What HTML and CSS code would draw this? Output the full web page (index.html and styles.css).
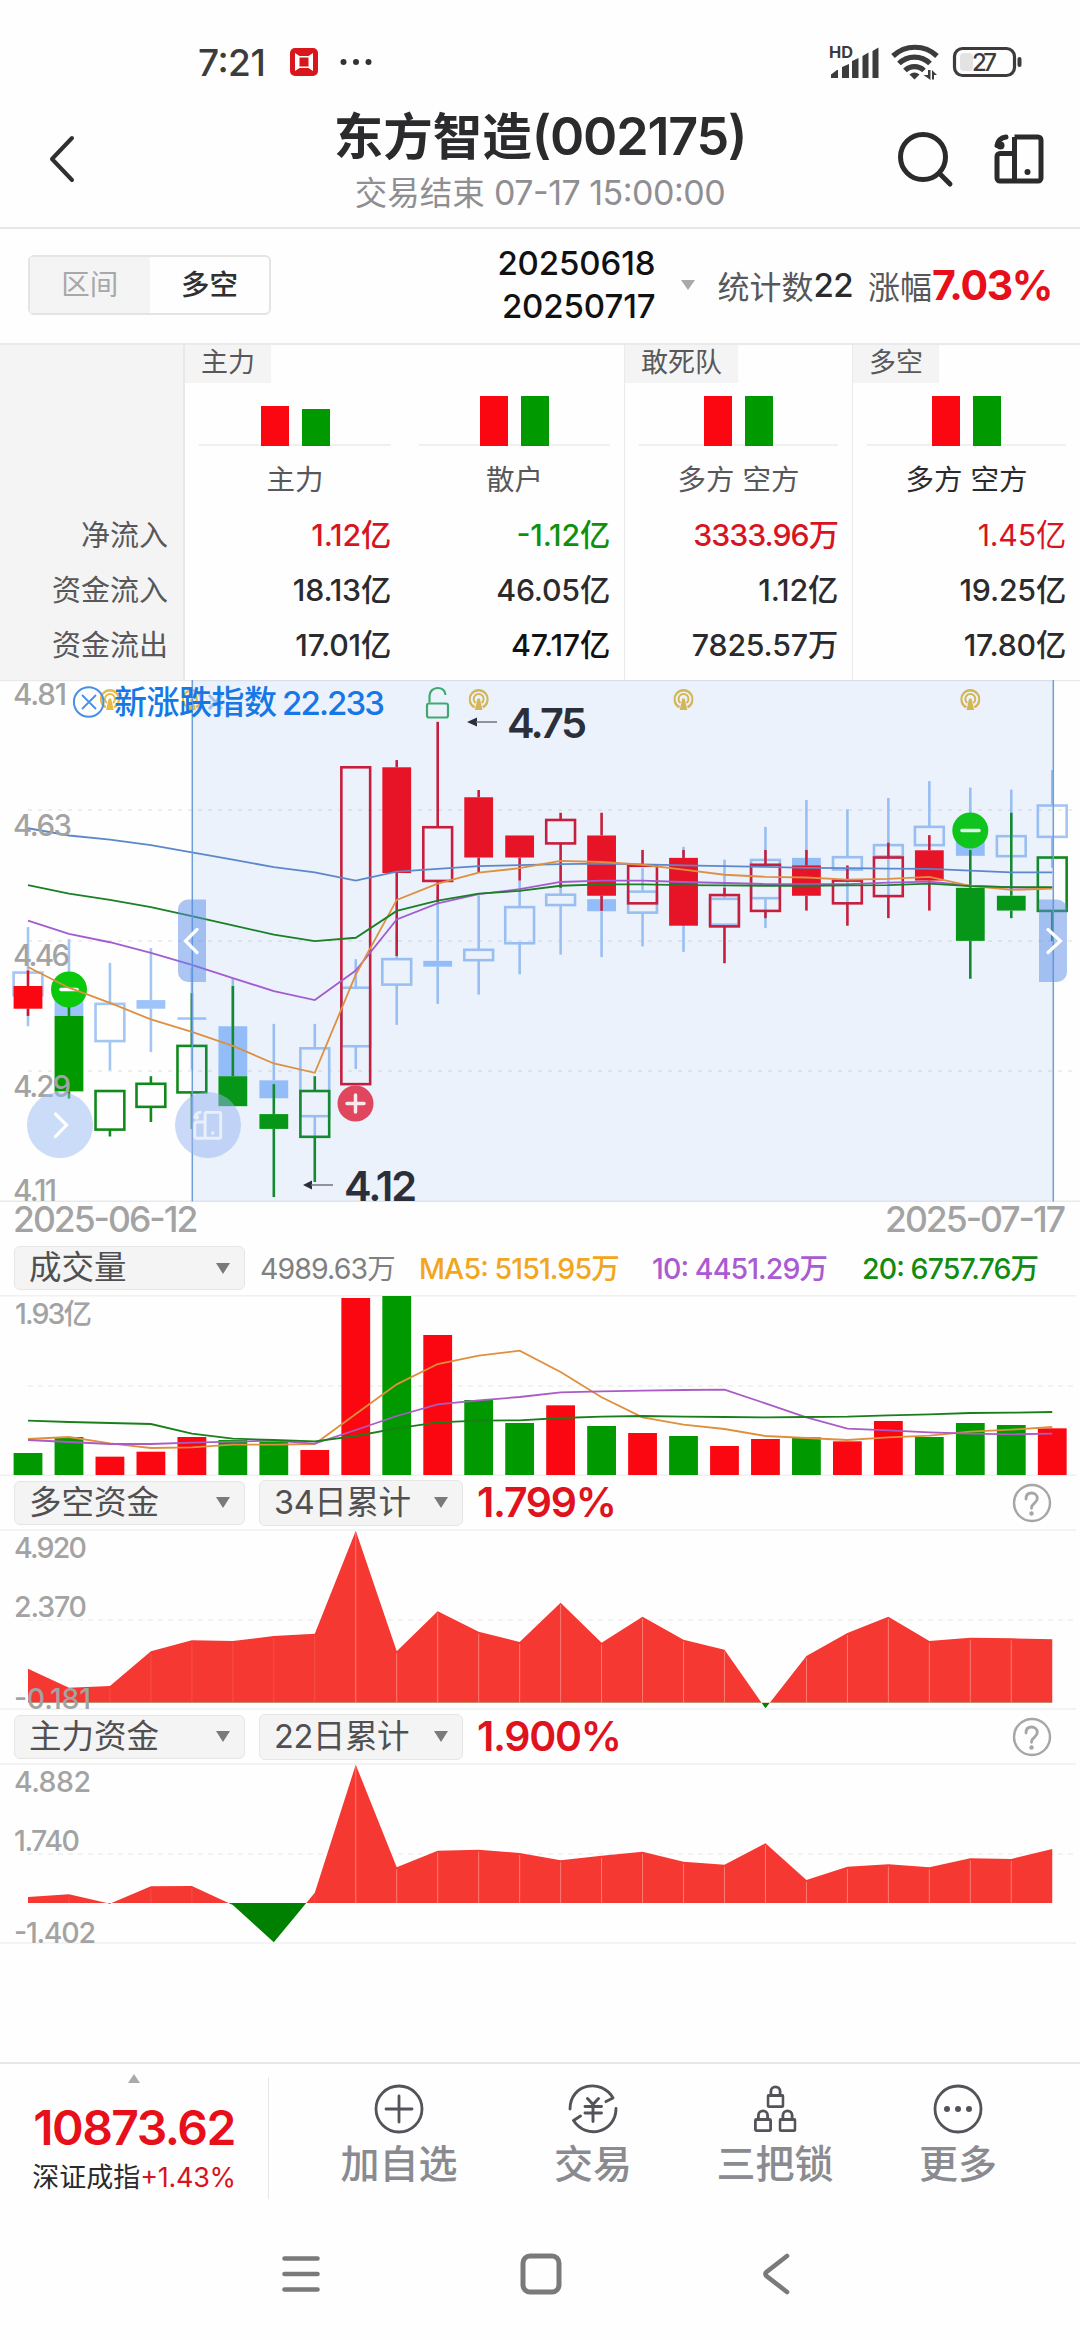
FILE: index.html
```html
<!DOCTYPE html>
<html lang="zh-CN">
<head>
<meta charset="utf-8">
<title>东方智造(002175)</title>
<link rel="stylesheet" href="styles.css">
</head>
<body>
<svg class="defs" width="0" height="0">
  <defs>
    <symbol id="split" viewBox="0 0 50 50">
      <path d="M20.500 3h23.500a3 3 0 0 1 3 3v38a3 3 0 0 1-3 3H6a3 3 0 0 1-3-3V22.500a3 3 0 0 1 3-3h13M20.500 3v44" fill="none" stroke="currentColor" stroke-width="5"/>
      <path d="M3 11.500Q4.500 4 12 3" fill="none" stroke="currentColor" stroke-width="5" stroke-linecap="round"/>
      <circle cx="6.500" cy="11.500" r="4" fill="currentColor"/>
      <circle cx="33.500" cy="38" r="3" fill="currentColor"/>
    </symbol>
    <symbol id="help" viewBox="0 0 40 40">
      <circle cx="20" cy="20" r="18" fill="none" stroke="#a6a6a6" stroke-width="2.400"/>
      <path d="M14 16c0-4 2.300-6 5.500-6s5.800 2.300 5.800 5.500c0 4.500-5.800 5-5.800 9v.8" fill="none" stroke="#a6a6a6" stroke-width="2.800" stroke-linecap="round"/>
      <circle cx="19.500" cy="30.500" r="2.200" fill="#a6a6a6"/>
    </symbol>
    <symbol id="tower" viewBox="0 0 20 21">
      <path d="M6 18.300A9 9 0 1 1 14 18.300" fill="none" stroke="#e5bb45" stroke-width="2.300"/>
      <path d="M7 14A5 5 0 1 1 13 14" fill="none" stroke="#e5bb45" stroke-width="2"/>
      <path d="M8.800 9.500h2.400L13.800 21H6.200Z" fill="#e5bb45"/>
    </symbol>
    <symbol id="lock" viewBox="0 0 18 23">
      <rect x="1.400" y="10.500" width="15.200" height="11.100" rx="1" fill="none" stroke="#53535a" stroke-width="2.800"/>
      <path d="M4.400 10V6.500C4.400 .2 13.600 .2 13.600 6.500V10" fill="none" stroke="#53535a" stroke-width="2.800"/>
    </symbol>
  </defs>
</svg>

<div class="status">
  <span class="clock">7:21</span>
  <svg class="badge" width="28" height="28" viewBox="0 0 28 28"><rect width="28" height="28" rx="5" fill="#d8161c"/><path d="M5 5l4.500 3h9L23 5v18l-4.500-3h-9L5 23Z" fill="#fff"/><path d="M9.500 9.500h9v9h-9Z" fill="#d8161c"/></svg>
  <svg class="dots" width="32" height="8" viewBox="0 0 32 8" fill="#333"><circle cx="3.500" cy="4" r="3"/><circle cx="16" cy="4" r="3"/><circle cx="28.500" cy="4" r="3"/></svg>
  <svg class="signals" width="196" height="40" viewBox="826 42 196 40">
    <text x="828" y="57.500" class="hd" textLength="24" lengthAdjust="spacingAndGlyphs">HD</text>
    <path d="M830 78v-3.500l6-4.500h1v8ZM841 78V67l7-3v14ZM851 78V61l6.500-3v20ZM861.500 78V56l6-3.500V78ZM871.500 78V51l6-3.500V78Z" fill="#3c3c3c"/>
    <g fill="none" stroke="#3c3c3c" stroke-width="5.200"><path d="M892 56a32 32 0 0 1 44 0"/><path d="M898 63.500a22 22 0 0 1 31 0"/><path d="M904 70.500a13.500 13.500 0 0 1 19 0"/></g>
    <path d="M908.500 74.500q5-4 10 0l-5 5ZM922.500 75h4.500v-5h2.500v10ZM931 70l5 5h-3v4.500h-2Z" fill="#3c3c3c"/>
    <rect x="953.500" y="48.500" width="60" height="27" rx="8" fill="none" stroke="#3c3c3c" stroke-width="3.200"/>
    <rect x="959" y="53" width="13" height="18" rx="4" fill="#e3e3e3"/>
    <text x="971" y="71" class="pct" textLength="25">27</text>
    <rect x="1016.500" y="57" width="4" height="10" rx="2" fill="#3c3c3c"/>
  </svg>
</div>

<header class="header">
  <svg class="back" width="30" height="50" viewBox="0 0 30 50"><path d="M25 4L5 25L25 46" fill="none" stroke="#303030" stroke-width="4" stroke-linecap="round" stroke-linejoin="round"/></svg>
  <div class="titles">
    <h1>东方智造<span>(002175)</span></h1>
    <p>交易结束 <span>07-17 15:00:00</span></p>
  </div>
  <svg class="search" width="58" height="58" viewBox="0 0 58 58"><circle cx="26" cy="26" r="22.500" fill="none" stroke="#2b2b2d" stroke-width="5"/><path d="M43 43L53 53" stroke="#2b2b2d" stroke-width="5" stroke-linecap="round"/></svg>
  <svg class="layout" width="50" height="50"><use href="#split"/></svg>
</header>

<div class="toolbar">
  <div class="toggle"><span class="off">区间</span><span class="on">多空</span></div>
  <div class="range"><span>20250618</span><span>20250717</span></div>
  <i class="caret"></i>
  <div class="stat">统计数<b>22</b></div>
  <div class="stat gain">涨幅<strong>7.03%</strong></div>
</div>

<section class="flows">
  <div class="col names"><span class="net">净流入</span><span class="in">资金流入</span><span class="out">资金流出</span></div>
  <div class="col">
    <em>主力</em>
    <div class="bars"><i class="r" style="height:40px"></i><i class="g" style="height:37px"></i></div>
    <h3>主力</h3>
    <span class="net up">1.12亿</span><span class="in">18.13亿</span><span class="out">17.01亿</span>
  </div>
  <div class="col">
    <div class="bars"><i class="r" style="height:50px"></i><i class="g" style="height:50px"></i></div>
    <h3>散户</h3>
    <span class="net down">-1.12亿</span><span class="in">46.05亿</span><span class="out strong">47.17亿</span>
  </div>
  <div class="col wide">
    <em>敢死队</em>
    <div class="bars"><i class="r" style="height:50px"></i><i class="g" style="height:50px"></i></div>
    <h3>多方 空方</h3>
    <span class="net up tight">3333.96万</span><span class="in">1.12亿</span><span class="out">7825.57万</span>
  </div>
  <div class="col wide">
    <em>多空</em>
    <div class="bars"><i class="r" style="height:50px"></i><i class="g" style="height:50px"></i></div>
    <h3 class="dark">多方 空方</h3>
    <span class="net up light">1.45亿</span><span class="in">19.25亿</span><span class="out">17.80亿</span>
  </div>
</section>

<svg class="chart" width="1080" height="522" viewBox="0 680 1080 522">
  <path d="M0 680.500H1080M0 1201.200H1080" stroke="#e9e9ec" stroke-width="1.500"/>
  <path d="M28 810H1072M28 940.900H1072M28 1071H1072" stroke="#ededed" stroke-width="2" stroke-dasharray="4 6"/>
  <g id="ghost"></g>
  <g id="candles"></g>
  <g id="towers"></g>
  <g stroke="#41ad63" fill="none" stroke-width="2.200"><rect x="427" y="703.500" width="21" height="14" rx="2"/><path d="M429.500 702.500V696c0-10.500 16-10.500 16-1"/></g>
  <rect x="192" y="680" width="861" height="521.500" fill="#468cf0" fill-opacity=".1"/>
  <g><circle cx="69" cy="989.500" r="18" fill="#0cc80c"/><path d="M61 989.500H77" stroke="#fff" stroke-width="3.500" stroke-linecap="round"/></g>
  <g><circle cx="970.300" cy="830.500" r="18" fill="#10c41e"/><path d="M962 830.500H979" stroke="#dff5e6" stroke-width="3.500" stroke-linecap="round"/></g>
  <g><circle cx="355.500" cy="1103.500" r="18" fill="#de475d"/><path d="M347 1103.500H364M355.500 1095V1112" stroke="#fbe9ee" stroke-width="3.500" stroke-linecap="round"/></g>
  <g id="averages"></g>
  <path d="M192.300 680V1201.500M1053.300 680V1201.500" stroke="#6f9fd8" stroke-width="1.500"/>
  <g class="axis">
    <text x="13" y="705.300" textLength="54">4.81</text>
    <text x="13" y="835.500" textLength="59">4.63</text>
    <text x="13" y="965.700" textLength="57">4.46</text>
    <text x="13" y="1096.500" textLength="58">4.29</text>
    <text x="13" y="1201" textLength="44">4.11</text>
  </g>
  <path d="M206 899.500H188a10 10 0 0 0-10 10V972a10 10 0 0 0 10 10H206Z" fill="#5a8ce6" fill-opacity=".5"/>
  <path d="M1039 899.500H1057a10 10 0 0 1 10 10V972a10 10 0 0 1-10 10H1039Z" fill="#5a8ce6" fill-opacity=".5"/>
  <path d="M197 929.500L185.500 941L197 952.500M1048 929.500L1060.500 941L1048 952.500" fill="none" stroke="#fff" stroke-width="3.200" stroke-linecap="round"/>
  <g><circle cx="60" cy="1125" r="33" fill="#96b9ef" fill-opacity=".5"/><path d="M55.500 1114L66.500 1125L55.500 1136.500" fill="none" stroke="#fff" stroke-width="3.200" stroke-linecap="round"/></g>
  <g><circle cx="208" cy="1125" r="33" fill="#96b4f0" fill-opacity=".5"/><svg x="193" y="1110.500" width="29.500" height="29.500" color="#e9effb"><use href="#split"/></svg></g>
  <g stroke="#4a8fe6" fill="none"><circle cx="88.700" cy="702" r="14.800" stroke-width="2"/><path d="M82 695L96 709M96 695L82 709" stroke-width="1.800"/><path d="M209 695L222 709M222 695L209 709" stroke="#9fc0f0" stroke-width="3"/></g>
  <text x="114" y="714" class="index" textLength="163">新涨跌指数</text>
  <text x="282" y="714.500" class="index" textLength="103">22.233</text>
  <g fill="#2b2f3a"><path d="M467 722L477 717.500V726.500Z"/><path d="M303 1185L312 1180.500V1189.500Z"/><path d="M476 721.300h21v1.400h-21ZM311 1184.300h22v1.400h-22Z" fill="#70747c"/></g>
  <text x="507" y="738" class="mark" textLength="80">4.75</text>
  <text x="344" y="1201" class="mark" textLength="73">4.12</text>
</svg>

<div class="dates"><span>2025-06-12</span><span>2025-07-17</span></div>

<div class="controls first">
  <div class="select">成交量<i></i></div>
  <span class="total">4989.63万</span><span class="ma5">MA5: 5151.95万</span><span class="ma10">10: 4451.29万</span><span class="ma20">20: 6757.76万</span>
</div>
<svg class="chart" width="1080" height="181" viewBox="0 1295 1080 181">
  <path d="M0 1295.700H1076M0 1475.200H1076" stroke="#f0f0f0" stroke-width="1.500"/>
  <path d="M28 1386H1074" stroke="#eeeeee" stroke-width="1.500" stroke-dasharray="5 5"/>
  <g id="volume"></g>
  <g class="axis thin"><text x="15" y="1324" textLength="77">1.93亿</text></g>
</svg>

<div class="controls">
  <div class="select">多空资金<i></i></div><div class="select small">34日累计<i></i></div>
  <strong>1.799%</strong><svg class="ask" width="40" height="40"><use href="#help"/></svg>
</div>
<svg class="chart" width="1080" height="181" viewBox="0 1529 1080 181">
  <path d="M0 1530H1076M0 1709H1076" stroke="#f0f0f0" stroke-width="1.500"/>
  <path d="M28 1620H1074" stroke="#eeeeee" stroke-width="1.500" stroke-dasharray="5 5"/>
  <g id="fundA"></g>
  <g class="axis thin">
    <text x="14" y="1558" textLength="73">4.920</text><text x="14" y="1617" textLength="73">2.370</text><text x="14" y="1708.500" textLength="77">-0.181</text>
  </g>
</svg>

<div class="controls">
  <div class="select">主力资金<i></i></div><div class="select small">22日累计<i></i></div>
  <strong>1.900%</strong><svg class="ask" width="40" height="40"><use href="#help"/></svg>
</div>
<svg class="chart" width="1080" height="181" viewBox="0 1763 1080 181">
  <path d="M0 1764H1076M0 1943H1076" stroke="#f0f0f0" stroke-width="1.500"/>
  <path d="M28 1854H1074" stroke="#eeeeee" stroke-width="1.500" stroke-dasharray="5 5"/>
  <g id="fundB"></g>
  <g class="axis thin">
    <text x="14" y="1792" textLength="77">4.882</text><text x="14" y="1851" textLength="66">1.740</text><text x="14" y="1942.500" textLength="82">-1.402</text>
  </g>
</svg>

<footer class="footer">
  <div class="market"><i></i><b>10873.62</b><p>深证成指<span>+1.43%</span></p></div>
  <nav class="tabs">
    <a><svg width="50" height="50" viewBox="0 0 50 50" fill="none" stroke="#53535a" stroke-width="2.800"><circle cx="25" cy="25" r="23"/><path d="M25 12V38M12 25H38" stroke-linecap="round"/></svg>加自选</a>
    <a><svg width="50" height="50" viewBox="0 0 50 50" fill="none" stroke="#53535a" stroke-width="2.900" stroke-linecap="round" stroke-linejoin="round"><path d="M2 25C2 -.5 33.500 -6 45 14L38 17.500M48 24.500C48 48 18.500 56.500 5.500 36.500L12.500 32M19.500 14.500L25 20.500L30.500 14.500M17 22.500H33.500M17 29H33.500M25 20.500V37.500"/></svg>交易</a>
    <a><svg width="50" height="50" viewBox="0 0 50 50"><use href="#lock" x="16.500" y="1" width="18" height="23"/><use href="#lock" x="4" y="25" width="18" height="23"/><use href="#lock" x="28.500" y="25" width="18" height="23"/></svg>三把锁</a>
    <a><svg width="50" height="50" viewBox="0 0 50 50"><circle cx="25" cy="25" r="23" fill="none" stroke="#53535a" stroke-width="2.800"/><g fill="#53535a"><circle cx="14" cy="25" r="3"/><circle cx="25" cy="25" r="3"/><circle cx="36" cy="25" r="3"/></g></svg>更多</a>
  </nav>
</footer>

<div class="keys">
  <svg width="40" height="44" viewBox="0 0 40 44"><path d="M3.500 6.500H36.500M3.500 22H36.500M3.500 37.500H36.500" stroke="#7a7a7a" stroke-width="4.600" stroke-linecap="round"/></svg>
  <svg width="44" height="44" viewBox="0 0 44 44"><rect x="4" y="4" width="36" height="36" rx="7" fill="none" stroke="#7a7a7a" stroke-width="5"/></svg>
  <svg width="32" height="44" viewBox="0 0 32 44"><path d="M27 4L6.500 20Q4.500 22 6.500 24L27 40" fill="none" stroke="#7a7a7a" stroke-width="4.600" stroke-linecap="round"/></svg>
</div>
<script src="charts.js"></script>
</body>
</html>
```
FILE: styles.css
```css
* { box-sizing: border-box; }
body {
  margin: 0;
  width: 1080px;
  height: 2340px;
  display: flex;
  flex-direction: column;
  background: #fefefe;
  color: #2b2b2d;
  font-family: Inter, "Noto Sans CJK SC", sans-serif;
  font-feature-settings: "case";
  overflow: hidden;
}
h1, h3, p { margin: 0; font-weight: 400; }
i, em { font-style: normal; }
.defs { position: absolute; }

.status { height: 108px; flex: none; padding: 16px 57px 0 198px; display: flex; align-items: center; }
.clock { width: 92px; font-size: 37px; font-weight: 500; letter-spacing: -.5px; color: #3c3c3c; }
.dots { margin-left: 22px; }
.signals { margin-left: auto; }
.hd { font-size: 15.500px; font-weight: 700; fill: #3c3c3c; }
.pct { font-size: 24px; font-weight: 500; fill: #3c3c3c; }

.header { height: 121px; flex: none; border-bottom: 2px solid #e6e6e8; display: flex; align-items: flex-start; padding: 0 34px 0 47px; }
.back { margin-top: 26px; }
.titles { width: 800px; margin-left: 63px; text-align: center; }
h1 { height: 60px; margin-top: -1px; line-height: 60px; font-size: 49.500px; font-weight: 700; white-space: nowrap; }
h1 span { font-size: 52px; font-weight: 600; letter-spacing: -1.200px; }
.titles p { height: 48px; line-height: 48px; margin-top: 2px; font-size: 32.500px; color: #8f8f93; white-space: nowrap; }
.titles p span { font-size: 34px; letter-spacing: -.5px; }
.search { flex: none; margin: 23px 0 0 -43px; }
.layout { flex: none; margin: 26px 0 0 39px; }

.toolbar { height: 114px; flex: none; padding: 0 28px 2px 28px; display: flex; align-items: center; }
.toggle { width: 244px; height: 60px; border: 2px solid #e4e4e5; border-radius: 6px; display: flex; font-size: 28.500px; line-height: 55px; text-align: center; }
.toggle span { flex: 1; }
.toggle .off { background: #f4f4f4; color: #a8a8a8; }
.toggle .on { color: #303030; font-weight: 500; }
.range { width: 385px; display: flex; flex-direction: column; text-align: right; font-size: 33px; line-height: 43px; font-weight: 500; letter-spacing: -.1px; color: #111; }
.caret { margin-left: 25px; border: 7px solid transparent; border-top: 10px solid #a9a9a9; border-bottom: 0; }
.stat { margin-left: 23px; font-size: 32px; color: #58585a; white-space: nowrap; display: flex; align-items: center; }
.stat b { font-size: 33px; font-weight: 500; color: #2b2b2d; letter-spacing: -.6px; }
.stat.gain { margin-left: 15px; }
.gain strong { font-size: 41px; font-weight: 700; color: #e60f1a; letter-spacing: -1.400px; }

.flows { height: 337px; flex: none; display: grid; grid-template-columns: 185px 220px 219px 228px 228px; }
.flows .col { border-top: 2px solid #eaeaea; display: grid; grid-template-rows: 38px 63px 63px repeat(3, 55px); padding: 0 14px; font-size: 30.300px; }
.flows .names { background: #f4f4f4; border-right: 2px solid #e8e8e8; padding-right: 15px; color: #58585a; font-size: 29px; }
.col.wide { border-left: 1.500px solid #eaeaea; }
.col em { grid-row: 1; justify-self: start; margin-left: -14px; padding: 0 16px; background: #f4f4f4; font-size: 27px; line-height: 36px; color: #58585a; white-space: nowrap; }
.bars { grid-row: 2; display: flex; justify-content: center; align-items: flex-end; gap: 13px; border-bottom: 2px solid #f0f0f0; }
.bars i { width: 28px; margin-bottom: -2px; }
.bars .r { background: #fa0712; }
.bars .g { background: #009900; }
.col h3 { grid-row: 3; font-size: 28.500px; line-height: 68px; text-align: center; color: #58585a; white-space: nowrap; }
.col h3.dark { color: #2b2b2d; }
.col > span { line-height: 53px; text-align: right; white-space: nowrap; font-weight: 500; letter-spacing: -.2px; }
.col .net { grid-row: 4; }
.col .in { grid-row: 5; }
.col .out { grid-row: 6; }
.names > span { font-weight: 400; letter-spacing: 0; }
.col > .tight { letter-spacing: -1px; }
.col .up { color: #d8141f; }
.col > .light { font-weight: 400; }
.col .down { color: #0e920e; }
.col .strong { color: #111; }

.chart { display: block; flex: none; }
.axis text { font-size: 29.500px; font-weight: 500; fill: #a3a3a3; }
.axis.thin text { font-size: 28.500px; }
.index { font-size: 33px; fill: #1677e6; font-weight: 500; }
.mark { font-size: 41.500px; font-weight: 600; fill: #2b2f3a; }

.dates { height: 39px; flex: none; padding: 0 16px 4px 13px; display: flex; justify-content: space-between; font-size: 35.500px; line-height: 35px; font-weight: 500; letter-spacing: -2px; color: #a3a3a3; }

.controls { height: 53px; flex: none; display: flex; align-items: center; padding-left: 14px; white-space: nowrap; }
.controls.first { height: 54px; }
.select { width: 231px; height: 44px; border: 1.500px solid #e6e6e6; border-radius: 6px; background: #f4f4f4; padding: 0 14px 0 14px; display: flex; align-items: center; justify-content: space-between; font-size: 32.500px; line-height: 40px; color: #505052; }
.select i { border: 7.500px solid transparent; border-top: 11px solid #7a7a7c; border-bottom: 0; }
.select.small { width: 204px; margin-left: 14px; height: 46px; letter-spacing: -.4px; }
.controls strong { margin-left: 14px; width: 535px; font-size: 41px; line-height: 46px; padding-bottom: 2px; font-weight: 600; letter-spacing: -1.300px; color: #df121d; }
.controls.first span { flex: none; padding-bottom: 3px; font-size: 28.500px; font-weight: 500; letter-spacing: -.9px; }
.controls .total { width: 159px; margin-left: 15px; color: #808080; }
.controls.first .total { font-weight: 400; }
.controls .ma5 { width: 233px; color: #f2a61c; }
.controls .ma10 { width: 210px; color: #ab5bd2; }
.controls .ma20 { color: #118c11; }

.footer { height: 140px; margin-top: 118px; flex: none; border-top: 2px solid #e6e6e8; display: flex; align-items: flex-start; }
.market { width: 269px; height: 122px; margin-top: 13px; border-right: 1.500px solid #e6e6e8; text-align: center; display: flex; flex-direction: column; align-items: center; }
.market i { margin-top: -3px; border: 6px solid transparent; border-bottom: 9px solid #aaa; border-top: 0; }
.market b { margin-top: 20px; font-size: 48px; line-height: 50px; font-weight: 600; letter-spacing: -1.500px; color: #e60f1a; }
.market p { margin-top: 8px; font-size: 27px; line-height: 34px; white-space: nowrap; }
.market span { color: #d8141f; letter-spacing: -.3px; }
.tabs { margin-left: 30px; display: grid; grid-template-columns: 200px 188px 176px 190px; padding-top: 20px; }
.tabs a { display: flex; flex-direction: column; align-items: center; font-size: 39px; line-height: 60px; font-weight: 500; color: #8a8b90; }
.keys { flex: none; margin-top: 50px; padding: 0 288px 0 281px; display: flex; justify-content: space-between; }
```
FILE: charts.js
```js
const NS = 'http://www.w3.org/2000/svg';
const STEP = 40.97;
const cx = i => 28 + STEP * i;

function add(parent, tag, attrs) {
  const el = document.createElementNS(NS, tag);
  for (const k in attrs) el.setAttribute(k, attrs[k]);
  parent.appendChild(el);
  return el;
}

// Candle rows: [index, style, high, bodyTop, bodyBottom, low], in chart units below y0
const y0 = 675;
const UNIT = 2.9037;
const py = v => y0 + v / UNIT;

function candle(g, [i, style, hi, top, bot, lo], solid, line) {
  const x = cx(i), t = py(top), b = py(bot);
  if (hi < top) add(g, 'path', { d: `M${x} ${py(hi)}V${t}`, stroke: line, 'stroke-width': 2.6 });
  if (lo > bot) add(g, 'path', { d: `M${x} ${b}V${py(lo)}`, stroke: line, 'stroke-width': 2.6 });
  if (style === 's') add(g, 'rect', { x: x - 14.4, y: t, width: 28.8, height: b - t, fill: solid });
  else add(g, 'rect', { x: x - 14.4, y: t, width: 28.8, height: b - t, fill: 'none', stroke: line, 'stroke-width': 2.6 });
}

const ghost = [
  [0,'h',732,864,930,1020],[1,'s',767,915,990,990],[2,'h',836,955,1063,1148],[3,'s',793,944,969,1095],
  [4,'s',850,994,1001,1146],[5,'s',880,1020,1165,1165],[6,'s',1013,1177,1229,1229],[7,'h',1013,1084,1281,1341],
  [8,'h',825,908,1078,1144],[9,'h',750,825,899,1016],[10,'s',640,830,847,955],[11,'h',640,798,828,928],
  [12,'h',597,674,779,869],[13,'h',600,638,668,812],[14,'s',600,651,686,819],[15,'h',560,629,690,788],
  [16,'s',499,560,700,804],[17,'h',536,650,725,725],[18,'h',441,537,648,735],[19,'s',363,531,560,560],
  [20,'h',390,529,565,663],[21,'h',357,494,527,642],[22,'h',308,441,494,494],[23,'s',327,480,525,525],
  [24,'h',333,468,526,526],[25,'h',276,379,470,560]
];
const candles = [
  [0,'s',858,903,969,990,'r'],[1,'s',915,990,1209,1230,'g'],[2,'h',1208,1208,1320,1340,'g'],[3,'h',1165,1187,1254,1298,'g'],
  [4,'h',924,1077,1212,1318,'g'],[5,'s',903,1165,1252,1252,'g'],[6,'s',1188,1275,1318,1516,'g'],[7,'h',1165,1208,1341,1472,'g'],
  [8,'h',268,268,1188,1188,'r'],[9,'s',247,268,575,816,'r'],[10,'h',136,442,598,660,'r'],[11,'s',334,355,530,575,'r'],
  [12,'s',466,466,530,597,'r'],[13,'h',400,421,489,618,'r'],[14,'s',400,466,641,685,'r'],[15,'h',508,554,663,663,'r'],
  [16,'s',508,531,728,728,'r'],[17,'h',618,639,730,837,'r'],[18,'h',508,551,685,706,'r'],[19,'s',508,553,641,684,'r'],
  [20,'h',553,597,663,728,'r'],[21,'h',487,530,642,706,'r'],[22,'s',465,509,597,684,'r'],[23,'s',508,618,772,882,'g'],
  [24,'s',400,641,684,706,'g'],[25,'h',530,530,685,772,'g']
];
const gGhost = document.getElementById('ghost');
ghost.forEach(c => candle(gGhost, c, '#9cc3fa', '#a3c6f3'));
const gMain = document.getElementById('candles');
candles.forEach(c => c[6] === 'r'
  ? candle(gMain, c, '#fa0712', '#d4142a')
  : candle(gMain, c, '#009900', '#108a1c'));

function polyline(g, values, map, color, width) {
  add(g, 'polyline', {
    points: values.map((v, i) => `${cx(i)},${map(v)}`).join(' '),
    fill: 'none', stroke: color, 'stroke-width': width
  });
}
const gAvg = document.getElementById('averages');
[
  ['#5b88cb', [445,466,478,494,515,536,558,573,597,571,563,555,552,549,548,550,553,555,557,560,561,562,563,568,573,573]],
  ['#a35cd0', [713,752,776,807,842,880,918,944,858,710,663,636,622,601,597,597,601,604,607,607,607,603,600,612,617,618]],
  ['#dd9040', [848,908,952,1000,1036,1077,1128,1155,870,653,606,574,561,540,543,551,565,580,586,588,594,592,586,612,624,620]],
  ['#1a7f25', [610,635,653,674,700,727,754,773,763,685,655,635,627,612,608,608,610,611,612,612,611,610,606,613,616,616]]
].forEach(([c, v]) => polyline(gAvg, v, py, c, 1.8));

const gTowers = document.getElementById('towers');
[2, 4, 11, 16, 23].forEach(i =>
  add(gTowers, 'use', { href: '#tower', x: cx(i) - 10, y: 689, width: 20, height: 21 }));

// Volume bars and their moving averages
const vy = v => 1190 + v / 3;
const vol = [789,741,800,785,741,750,755,780,324,318,435,630,699,646,708,729,738,768,747,742,754,693,741,699,705,715];
const volColor = 'ggrrrggrrgrggrgrgrrgrrgggr';
const gVol = document.getElementById('volume');
vol.forEach((v, i) => add(gVol, 'rect', {
  x: cx(i) - 14.4, y: vy(v), width: 28.8, height: (855 - v) / 3,
  fill: volColor[i] === 'r' ? '#fa0712' : '#009900'
}));
[
  ['#e08f3c', [747,741,760,774,772,764,764,762,672,583,522,497,482,546,622,682,704,717,738,744,750,742,737,725,719,711]],
  ['#a95cc6', [750,756,762,762,758,755,752,761,720,678,643,631,621,607,604,602,600,599,640,682,716,721,727,731,733,731]],
  ['#1a7f1a', [692,696,699,702,731,746,750,754,738,715,697,692,691,684,680,678,680,681,682,681,680,676,673,669,668,666]]
].forEach(([c, v]) => polyline(gVol, v, vy, c, 1.8));

// Net fund areas: red above the zero line, green below it
function area(id, values, base) {
  const g = document.getElementById(id);
  const y = v => 1470 + v / 3, b = y(base);
  const pts = `${cx(0)},${b} ` + values.map((v, i) => `${cx(i)},${y(v)}`).join(' ') + ` ${cx(25)},${b}`;
  [['up', b - 200, 200, '#f53832'], ['dn', b, 60, '#008000']].forEach(([n, top, h, fill]) => {
    const clip = add(g, 'clipPath', { id: id + n });
    add(clip, 'rect', { x: 0, y: top, width: 1080, height: h });
    add(g, 'polygon', { points: pts, fill, 'clip-path': `url(#${id + n})` });
  });
  values.forEach((v, i) => {
    if (i && i < 25 && v < base) add(g, 'path', { d: `M${cx(i)} ${y(v) + 2}V${b}`, stroke: '#ff8d86', 'stroke-width': i < 8 ? .3 : .8 });
  });
}
area('fundA', [596,653,648,544,511,513,498,491,182,544,424,485,516,398,518,440,509,539,715,558,489,440,513,503,505,508], 698);
area('fundB', [1281,1273,1301,1249,1248,1305,1417,1268,884,1192,1142,1139,1149,1171,1157,1145,1175,1184,1120,1230,1190,1183,1192,1165,1167,1137], 1299);
```
